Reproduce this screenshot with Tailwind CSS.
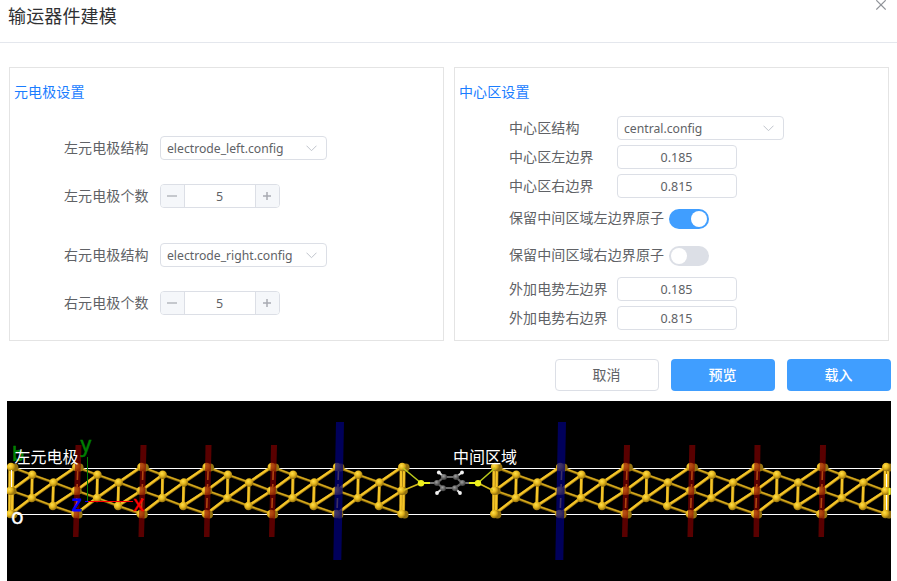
<!DOCTYPE html>
<html lang="zh-CN">
<head>
<meta charset="utf-8">
<title>输运器件建模</title>
<script src="https://cdn.jsdelivr.net/npm/@tailwindcss/browser@4"></script>
</head>
<body class="w-[897px] h-[581px] overflow-hidden bg-white font-['Noto_Sans','Noto_Sans_CJK_SC',sans-serif] text-[#606266] text-sm">
<header class="h-[43px] border-b border-[#e4e7ed] flex justify-between pl-2 pr-[11px]">
  <h1 class="text-lg leading-[30px] tracking-[.15px] text-[#303133] font-['Noto_Sans_CJK_SC',sans-serif]">输运器件建模</h1>
  <svg class="w-[10px] h-[10px]" viewBox="0 0 10 10" fill="none" stroke="#909399" stroke-width="1.2"><path d="M.3.2l9.4 9.4M9.7.2L.3 9.6"/></svg>
</header>

<main class="pl-[9px] pr-2 pt-6">
  <div class="flex gap-[10px]">
    <section class="w-[435px] h-[274px] border border-[#e4e4e4] pl-1">
      <h2 class="mt-[14px] h-5 leading-5 tracking-[.1px] text-[#1a7dff]">元电极设置</h2>
      <div class="pl-[50px] pt-[34px]">
        <div class="flex items-center h-6 mb-6"><span class="w-24 tracking-[.1px]">左元电极结构</span><div class="w-[167px] h-6 border border-[#dcdfe6] rounded flex items-center justify-between pl-[6px] pr-[9px] text-[12.2px]"><span class="pt-[2px]">electrode_left.config</span><svg class="w-[11px] h-[7px]" viewBox="0 0 11 7" fill="none" stroke="#c0c4cc"><path d="M.5.7l5 5 5-5"/></svg></div></div>
        <div class="flex items-center h-6 mb-[35px]"><span class="w-24 tracking-[.1px]">左元电极个数</span><div class="w-[120px] h-6 border border-[#dcdfe6] rounded flex overflow-hidden text-[12.5px] leading-[23px]"><span class="w-6 bg-[#f5f7fa] border-r border-[#dcdfe6] flex items-center justify-center pr-px"><svg class="w-[10px] h-[10px]" viewBox="0 0 10 10" stroke="#b5b8be" stroke-width="1.6"><path d="M0 5h10"/></svg></span><span class="flex-1 text-center pr-px">5</span><span class="w-6 bg-[#f5f7fa] border-l border-[#dcdfe6] flex items-center justify-center pr-px"><svg class="w-2 h-2" viewBox="0 0 8 8" stroke="#a8abb2" stroke-width="1.5"><path d="M0 4h8M4 0v8"/></svg></span></div></div>
        <div class="flex items-center h-6 mb-6"><span class="w-24 tracking-[.1px]">右元电极结构</span><div class="w-[167px] h-6 border border-[#dcdfe6] rounded flex items-center justify-between pl-[6px] pr-[9px] text-[12.2px]"><span class="pt-[2px]">electrode_right.config</span><svg class="w-[11px] h-[7px]" viewBox="0 0 11 7" fill="none" stroke="#c0c4cc"><path d="M.5.7l5 5 5-5"/></svg></div></div>
        <div class="flex items-center h-6"><span class="w-24 tracking-[.1px]">右元电极个数</span><div class="w-[120px] h-6 border border-[#dcdfe6] rounded flex overflow-hidden text-[12.5px] leading-[23px]"><span class="w-6 bg-[#f5f7fa] border-r border-[#dcdfe6] flex items-center justify-center pr-px"><svg class="w-[10px] h-[10px]" viewBox="0 0 10 10" stroke="#b5b8be" stroke-width="1.6"><path d="M0 5h10"/></svg></span><span class="flex-1 text-center pr-px">5</span><span class="w-6 bg-[#f5f7fa] border-l border-[#dcdfe6] flex items-center justify-center pr-px"><svg class="w-2 h-2" viewBox="0 0 8 8" stroke="#a8abb2" stroke-width="1.5"><path d="M0 4h8M4 0v8"/></svg></span></div></div>
      </div>
    </section>

    <section class="w-[435px] h-[274px] border border-[#e4e4e4] pl-1">
      <h2 class="mt-[14px] h-5 leading-5 tracking-[.1px] text-[#1a7dff]">中心区设置</h2>
      <div class="pl-[50px] pt-[14px]">
        <div class="flex items-center h-6 mb-[5px]"><span class="w-[108px] tracking-[.1px]">中心区结构</span><div class="w-[167px] h-6 border border-[#dcdfe6] rounded flex items-center justify-between pl-[6px] pr-[9px] text-[12.2px]"><span class="pt-[2px]">central.config</span><svg class="w-[11px] h-[7px]" viewBox="0 0 11 7" fill="none" stroke="#c0c4cc"><path d="M.5.7l5 5 5-5"/></svg></div></div>
        <div class="flex items-center h-6 mb-[5px]"><span class="w-[108px] tracking-[.1px]">中心区左边界</span><div class="w-[120px] h-6 border border-[#dcdfe6] rounded text-[12.5px] leading-[23px] text-center pr-px">0.185</div></div>
        <div class="flex items-center h-6 mb-[11px]"><span class="w-[108px] tracking-[.1px]">中心区右边界</span><div class="w-[120px] h-6 border border-[#dcdfe6] rounded text-[12.5px] leading-[23px] text-center pr-px">0.815</div></div>
        <div class="flex items-center h-5 mb-[17px]"><span class="w-40 pb-[2px] tracking-[.1px]">保留中间区域左边界原子</span><span class="w-10 h-5 rounded-full bg-[#409eff] flex items-center justify-end p-[2px]"><i class="size-4 rounded-full bg-white"></i></span></div>
        <div class="flex items-center h-5 mb-[11px]"><span class="w-40 pb-[2px] tracking-[.1px]">保留中间区域右边界原子</span><span class="w-10 h-5 rounded-full bg-[#dcdfe6] flex items-center p-[2px]"><i class="size-4 rounded-full bg-white"></i></span></div>
        <div class="flex items-center h-6 mb-[5px]"><span class="w-[108px] tracking-[.1px]">外加电势左边界</span><div class="w-[120px] h-6 border border-[#dcdfe6] rounded text-[12.5px] leading-[23px] text-center pr-px">0.185</div></div>
        <div class="flex items-center h-6"><span class="w-[108px] tracking-[.1px]">外加电势右边界</span><div class="w-[120px] h-6 border border-[#dcdfe6] rounded text-[12.5px] leading-[23px] text-center pr-px">0.815</div></div>
      </div>
    </section>
  </div>
</main>

<div class="flex justify-end gap-3 pr-[6px] pt-[18px] pb-[10px]">
  <button class="w-[104px] h-8 rounded border border-[#dcdfe6] pr-px">取消</button>
  <button class="w-[104px] h-8 rounded bg-[#409eff] text-white font-medium pr-px">预览</button>
  <button class="w-[104px] h-8 rounded bg-[#409eff] text-white font-medium pr-px">载入</button>
</div>

<svg id="scene" class="block ml-[7px] w-[884px] h-[180px] bg-black" viewBox="7 401 884 180" font-family="'Noto Sans','Noto Sans CJK SC',sans-serif">
  <defs>
    <radialGradient id="au" cx=".4" cy=".35" r=".65"><stop offset="0" stop-color="#ffe04a"/><stop offset=".5" stop-color="#e8b91e"/><stop offset="1" stop-color="#96720c"/></radialGradient>
    <radialGradient id="ca" cx=".4" cy=".35" r=".65"><stop offset="0" stop-color="#a0a0a0"/><stop offset="1" stop-color="#3c3c3c"/></radialGradient>
  </defs>
  <path d="M11 468.500H887M11 514.500H887" stroke="#fff"/>
  <text x="12" y="461" font-size="20" fill="#008000" stroke="#008000" stroke-width=".6">b</text>
  <path d="M12.500 500v14" stroke="#008000"/>
  <g id="lattice"></g>
  <path d="M11.500 470V487M886.500 474V487M886.500 495V510" stroke="#fff"/>
  <path d="M889.500 488v7" stroke="#e8f020" stroke-width="2"/>
  <g fill="none">
    <path d="M403 468L421 483M495 468L478 483" stroke="#b9c81c" stroke-width="1.6"/>
    <path d="M403 490.500L421 483M493 490.500L478 483" stroke="#d2b91d" stroke-width="1.8"/>
    <path d="M421 483H430M469 483H478" stroke="#e8f020" stroke-width="1.8"/>
    <path d="M430 483H437M462 483H469" stroke="#777" stroke-width="1.8"/>
    <path d="M437 483L444 477H456L462 483L455 488H443Z" stroke="#6c6c6c" stroke-width="2.2"/>
    <path d="M444 477L439 472.500M456 477L462 472.500M443 488L437 493M455 488L460 493" stroke="#ddd" stroke-width="2"/>
  </g>
  <g fill="url(#ca)"><circle cx="437" cy="483" r="3"/><circle cx="444" cy="477" r="3"/><circle cx="456" cy="477" r="3"/><circle cx="462.500" cy="483" r="3"/><circle cx="455" cy="488.300" r="3"/><circle cx="443" cy="488.300" r="3"/></g>
  <g fill="#f2f2f2"><circle cx="438.800" cy="472.500" r="1.900"/><circle cx="462" cy="472.500" r="1.900"/><circle cx="437" cy="493" r="1.900"/><circle cx="460" cy="493" r="1.900"/></g>
  <g fill="#eef01c"><circle cx="421" cy="483.300" r="3.200"/><circle cx="478" cy="483.300" r="3.200"/></g>
  <g id="planes"></g>
  <path d="M87.500 457V501" stroke="#008000"/><path d="M88 501.500H133" stroke="#f00"/><path d="M85 501.500h3" stroke="#00f"/>
  <text x="80.500" y="452" font-size="21" fill="#008000" stroke="#008000" stroke-width=".5">y</text>
  <text x="72" y="511" font-size="21" fill="#00f" stroke="#00f" stroke-width=".8">z</text>
  <text x="133" y="511" font-size="21" fill="#f00" stroke="#f00" stroke-width=".3">x</text>
  <text x="11" y="523.500" font-size="21" fill="#fff" stroke="#fff" stroke-width=".3">o</text>
  <text x="14.500" y="462.500" font-size="16" fill="#fff">左元电极</text>
  <text x="453" y="462.500" font-size="16" fill="#fff">中间区域</text>
</svg>

<script>
  var bonds = '', atoms = '', planes = '';
  function bond(x1, y1, x2, y2, dark) {
    var d = 'M' + x1 + ' ' + y1 + 'L' + x2 + ' ' + y2;
    bonds += '<path d="' + d + '" stroke="' + (dark ? '#80620a' : '#a17b10') + '" stroke-width="' + (dark ? 2.8 : 3.1) + '"/>' +
      '<path d="' + d + '" stroke="' + (dark ? '#d9ac1e' : '#f5c528') + '" stroke-width="' + (dark ? 1.3 : 2.2) + '" transform="translate(-.2 -.4)"/>';
  }
  function atom(x, y) {
    atoms += '<circle cx="' + x + '" cy="' + y + '" r="4.2" fill="url(#au)"/>';
  }
  function column(x, end) {
    atoms += '<circle cx="' + (x + 3.5) + '" cy="467.500" r="3.900" fill="#947210"/><circle cx="' + (x + 2.5) + '" cy="514.500" r="3.900" fill="#947210"/><circle cx="' + (x + 1.8) + '" cy="491" r="3.800" fill="#947210"/>';
    atom(x, 467); atom(x - .8, 490.7); atom(x - .8, 514);
    if (end) {
      bond(x - 1, 467, x - 1.3, 514);
      bond(x + 2, 467, x + 1.2, 514);
    } else {
      bonds += '<path d="M' + (x + 1.5) + ' 470L' + x + ' 512" stroke="#f0c028" stroke-width="1.6" stroke-dasharray="10 4"/>';
    }
  }
  // Each electrode block: six repeating cells
  [11, 495].forEach(function (x0) {
    for (var k = 0; k < 6; k++) {
      var x = x0 + 65.2 * k, n = x + 65.2;
      column(x, k === 0);
      bond(x, 467, x + 21.3, 475, true);
      bond(x + 21.3, 475, x + 42.5, 482.5, true);
      bond(x + 42.5, 482.5, n - .8, 490.7, true);
      bond(x, 490.7, x + 20.8, 498, true);
      bond(x + 20.8, 498, x + 41.8, 506, true);
      bond(x + 41.8, 506, n, 514, true);
      bond(x, 490.7, x + 21.3, 475);
      bond(x, 514, x + 20.8, 498);
      bond(x + 20.8, 498, x + 42.5, 482.5);
      bond(x + 42.5, 482.5, n, 467);
      bond(x + 41.8, 506, n, 490.7);
      bond(x + 21.3, 475, x + 20.8, 498);
      bond(x + 42.5, 482.5, x + 41.8, 506);
      atom(x + 21.3, 474.7); atom(x + 42.5, 482.5);
      atom(x + 20.8, 498); atom(x + 41.8, 506);
    }
    column(x0 + 65.2 * 6, true);
  });
  [[75.500, 78.500], [141, 143.500], [206.500, 208.500], [271.500, 274], [624.500, 627], [690, 692.300], [756, 757.500], [821, 823]].forEach(function (p) {
    var b = p[0], t = p[1];
    planes += '<path d="M' + (t - 3) + ' 445H' + (t + 3) + 'L' + (b + 3) + ' 537H' + (b - 2.500) + 'Z" fill="#8c0000" fill-opacity=".64"/>';
  });
  [[337.300, 340], [559.300, 562]].forEach(function (p) {
    var b = p[0], t = p[1];
    planes += '<path d="M' + (t - 4) + ' 422H' + (t + 4) + 'L' + (b + 4) + ' 560H' + (b - 4) + 'Z" fill="#000078" fill-opacity=".75"/>';
  });
  document.getElementById('lattice').innerHTML = bonds + atoms;
  document.getElementById('planes').innerHTML = planes;
</script>
</body>
</html>
